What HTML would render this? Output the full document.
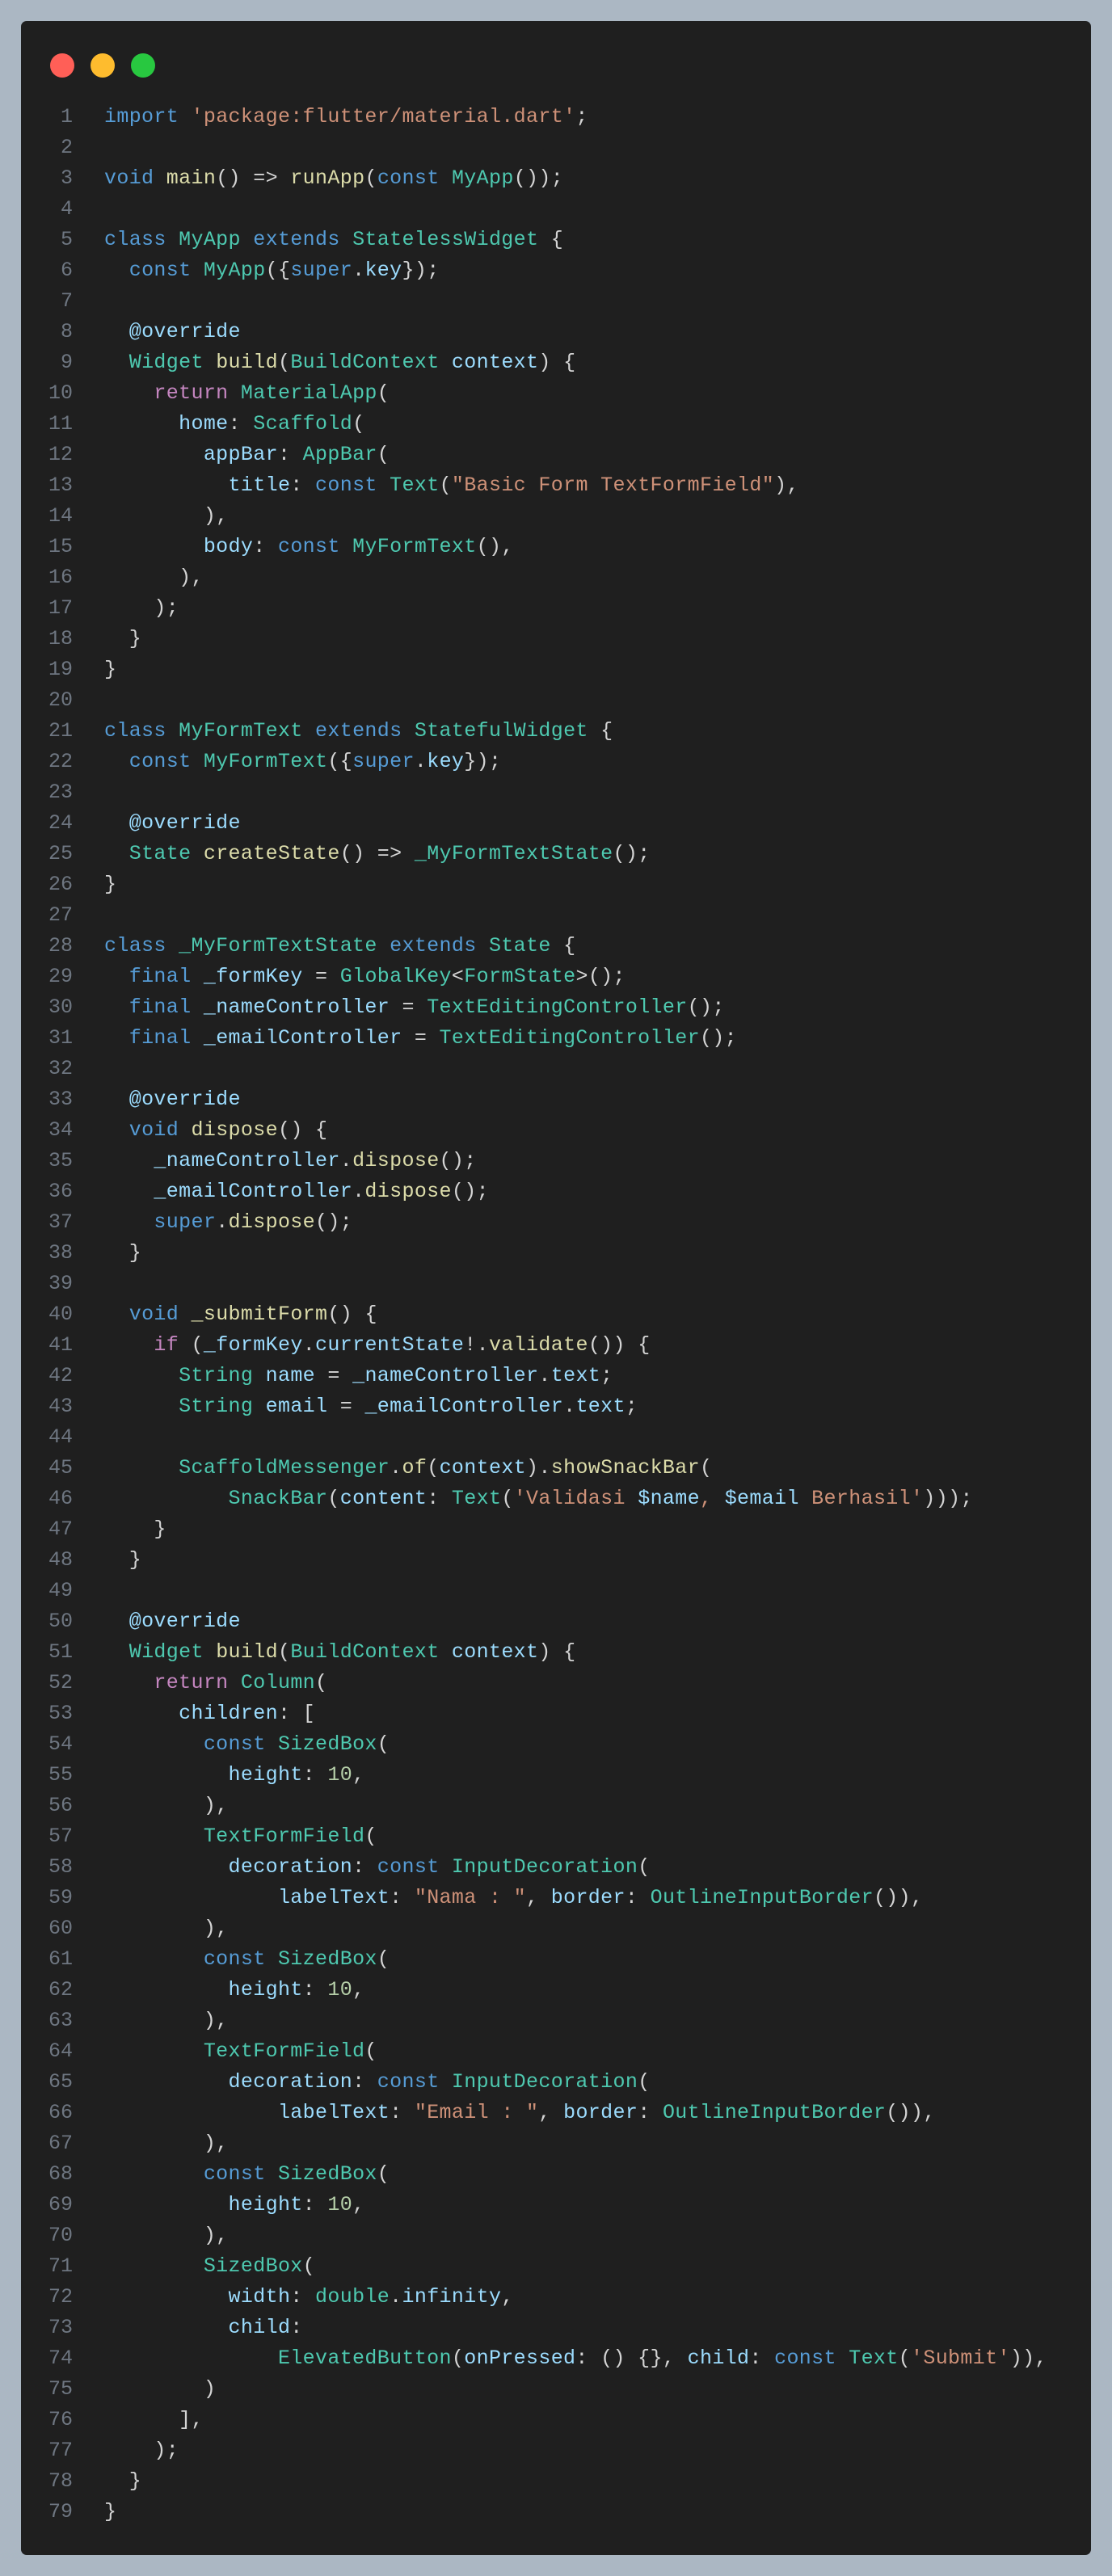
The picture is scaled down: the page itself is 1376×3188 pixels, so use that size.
<!DOCTYPE html>
<html><head><meta charset="utf-8"><style>
html,body{margin:0;padding:0;background:#abb7c3;width:1376px;height:3188px;overflow:hidden}
.card{position:absolute;left:26px;top:26px;width:1324px;height:3136px;background:#1f1f1f;border-radius:7px}
.dot{position:absolute;top:40px;width:30px;height:30px;border-radius:50%}
.code{position:absolute;left:0;top:100px;font-family:"Liberation Mono",monospace;font-size:25px;line-height:38px;letter-spacing:0.35px;color:#d4d4d4;white-space:pre}
.ln{display:inline-block;width:64px;text-align:right;color:#6e7681;margin-right:39px;letter-spacing:0}
.k{color:#569cd6}.s{color:#ce9178}.f{color:#dcdcaa}.c{color:#4ec9b0}.v{color:#9cdcfe}.p{color:#c586c0}.n{color:#b5cea8}
</style></head><body>
<div class="card">
<div class="dot" style="left:36px;background:#ff5f57"></div>
<div class="dot" style="left:86px;background:#febc2e"></div>
<div class="dot" style="left:136px;background:#28c840"></div>
<div class="code"><span class="ln">1</span><span class="k">import</span> <span class="s">'package:flutter/material.dart'</span>;
<span class="ln">2</span>
<span class="ln">3</span><span class="k">void</span> <span class="f">main</span>() =&gt; <span class="f">runApp</span>(<span class="k">const</span> <span class="c">MyApp</span>());
<span class="ln">4</span>
<span class="ln">5</span><span class="k">class</span> <span class="c">MyApp</span> <span class="k">extends</span> <span class="c">StatelessWidget</span> {
<span class="ln">6</span>  <span class="k">const</span> <span class="c">MyApp</span>({<span class="k">super</span>.<span class="v">key</span>});
<span class="ln">7</span>
<span class="ln">8</span>  <span class="v">@override</span>
<span class="ln">9</span>  <span class="c">Widget</span> <span class="f">build</span>(<span class="c">BuildContext</span> <span class="v">context</span>) {
<span class="ln">10</span>    <span class="p">return</span> <span class="c">MaterialApp</span>(
<span class="ln">11</span>      <span class="v">home</span>: <span class="c">Scaffold</span>(
<span class="ln">12</span>        <span class="v">appBar</span>: <span class="c">AppBar</span>(
<span class="ln">13</span>          <span class="v">title</span>: <span class="k">const</span> <span class="c">Text</span>(<span class="s">"Basic Form TextFormField"</span>),
<span class="ln">14</span>        ),
<span class="ln">15</span>        <span class="v">body</span>: <span class="k">const</span> <span class="c">MyFormText</span>(),
<span class="ln">16</span>      ),
<span class="ln">17</span>    );
<span class="ln">18</span>  }
<span class="ln">19</span>}
<span class="ln">20</span>
<span class="ln">21</span><span class="k">class</span> <span class="c">MyFormText</span> <span class="k">extends</span> <span class="c">StatefulWidget</span> {
<span class="ln">22</span>  <span class="k">const</span> <span class="c">MyFormText</span>({<span class="k">super</span>.<span class="v">key</span>});
<span class="ln">23</span>
<span class="ln">24</span>  <span class="v">@override</span>
<span class="ln">25</span>  <span class="c">State</span> <span class="f">createState</span>() =&gt; <span class="c">_MyFormTextState</span>();
<span class="ln">26</span>}
<span class="ln">27</span>
<span class="ln">28</span><span class="k">class</span> <span class="c">_MyFormTextState</span> <span class="k">extends</span> <span class="c">State</span> {
<span class="ln">29</span>  <span class="k">final</span> <span class="v">_formKey</span> = <span class="c">GlobalKey</span>&lt;<span class="c">FormState</span>&gt;();
<span class="ln">30</span>  <span class="k">final</span> <span class="v">_nameController</span> = <span class="c">TextEditingController</span>();
<span class="ln">31</span>  <span class="k">final</span> <span class="v">_emailController</span> = <span class="c">TextEditingController</span>();
<span class="ln">32</span>
<span class="ln">33</span>  <span class="v">@override</span>
<span class="ln">34</span>  <span class="k">void</span> <span class="f">dispose</span>() {
<span class="ln">35</span>    <span class="v">_nameController</span>.<span class="f">dispose</span>();
<span class="ln">36</span>    <span class="v">_emailController</span>.<span class="f">dispose</span>();
<span class="ln">37</span>    <span class="k">super</span>.<span class="f">dispose</span>();
<span class="ln">38</span>  }
<span class="ln">39</span>
<span class="ln">40</span>  <span class="k">void</span> <span class="f">_submitForm</span>() {
<span class="ln">41</span>    <span class="p">if</span> (<span class="v">_formKey</span>.<span class="v">currentState</span>!.<span class="f">validate</span>()) {
<span class="ln">42</span>      <span class="c">String</span> <span class="v">name</span> = <span class="v">_nameController</span>.<span class="v">text</span>;
<span class="ln">43</span>      <span class="c">String</span> <span class="v">email</span> = <span class="v">_emailController</span>.<span class="v">text</span>;
<span class="ln">44</span>
<span class="ln">45</span>      <span class="c">ScaffoldMessenger</span>.<span class="f">of</span>(<span class="v">context</span>).<span class="f">showSnackBar</span>(
<span class="ln">46</span>          <span class="c">SnackBar</span>(<span class="v">content</span>: <span class="c">Text</span>(<span class="s">'Validasi </span><span class="v">$name</span><span class="s">, </span><span class="v">$email</span><span class="s"> Berhasil'</span>)));
<span class="ln">47</span>    }
<span class="ln">48</span>  }
<span class="ln">49</span>
<span class="ln">50</span>  <span class="v">@override</span>
<span class="ln">51</span>  <span class="c">Widget</span> <span class="f">build</span>(<span class="c">BuildContext</span> <span class="v">context</span>) {
<span class="ln">52</span>    <span class="p">return</span> <span class="c">Column</span>(
<span class="ln">53</span>      <span class="v">children</span>: [
<span class="ln">54</span>        <span class="k">const</span> <span class="c">SizedBox</span>(
<span class="ln">55</span>          <span class="v">height</span>: <span class="n">10</span>,
<span class="ln">56</span>        ),
<span class="ln">57</span>        <span class="c">TextFormField</span>(
<span class="ln">58</span>          <span class="v">decoration</span>: <span class="k">const</span> <span class="c">InputDecoration</span>(
<span class="ln">59</span>              <span class="v">labelText</span>: <span class="s">"Nama : "</span>, <span class="v">border</span>: <span class="c">OutlineInputBorder</span>()),
<span class="ln">60</span>        ),
<span class="ln">61</span>        <span class="k">const</span> <span class="c">SizedBox</span>(
<span class="ln">62</span>          <span class="v">height</span>: <span class="n">10</span>,
<span class="ln">63</span>        ),
<span class="ln">64</span>        <span class="c">TextFormField</span>(
<span class="ln">65</span>          <span class="v">decoration</span>: <span class="k">const</span> <span class="c">InputDecoration</span>(
<span class="ln">66</span>              <span class="v">labelText</span>: <span class="s">"Email : "</span>, <span class="v">border</span>: <span class="c">OutlineInputBorder</span>()),
<span class="ln">67</span>        ),
<span class="ln">68</span>        <span class="k">const</span> <span class="c">SizedBox</span>(
<span class="ln">69</span>          <span class="v">height</span>: <span class="n">10</span>,
<span class="ln">70</span>        ),
<span class="ln">71</span>        <span class="c">SizedBox</span>(
<span class="ln">72</span>          <span class="v">width</span>: <span class="c">double</span>.<span class="v">infinity</span>,
<span class="ln">73</span>          <span class="v">child</span>:
<span class="ln">74</span>              <span class="c">ElevatedButton</span>(<span class="v">onPressed</span>: () {}, <span class="v">child</span>: <span class="k">const</span> <span class="c">Text</span>(<span class="s">'Submit'</span>)),
<span class="ln">75</span>        )
<span class="ln">76</span>      ],
<span class="ln">77</span>    );
<span class="ln">78</span>  }
<span class="ln">79</span>}</div>
</div>
</body></html>
